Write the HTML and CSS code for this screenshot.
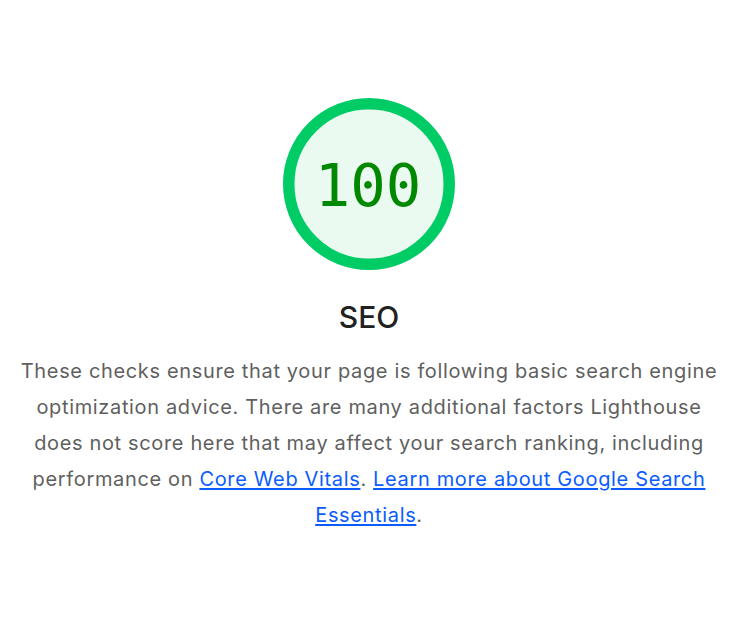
FILE: index.html
```html
<!DOCTYPE html>
<html lang="en">
<head>
<meta charset="utf-8">
<title>SEO</title>
<link rel="stylesheet" href="styles.css">
</head>
<body>
<main class="category">
  <div class="gauge">
    <svg class="gauge-svg" viewBox="0 0 172 172" width="172" height="172" aria-hidden="true">
      <circle cx="86" cy="86" r="80.25" fill="#ebfaf0" stroke="#00cc66" stroke-width="11.5"/>
    </svg>
    <span class="gauge-value">100</span>
  </div>
  <h2 class="title">SEO</h2>
  <p class="description">These checks ensure that your page is following basic search engine optimization advice. There are many additional factors Lighthouse does not score here that may affect your search ranking, including performance on <a href="#">Core Web Vitals</a>. <a href="#">Learn more about Google Search Essentials</a>.</p>
</main>
</body>
</html>
```
FILE: styles.css
```css
html, body {
  margin: 0;
  padding: 0;
  background: #ffffff;
}
body {
  width: 750px;
  height: 630px;
  font-family: "Inter", "Liberation Sans", sans-serif;
}
.category {
  width: 738px;
  display: flex;
  flex-direction: column;
  align-items: center;
  padding-top: 98px;
}
.gauge {
  position: relative;
  width: 172px;
  height: 172px;
  display: flex;
  align-items: center;
  justify-content: center;
}
.gauge-svg {
  position: absolute;
  inset: 0;
}
.gauge-value {
  position: relative;
  top: 1px;
  left: -1px;
  font-family: "DejaVu Sans Mono", monospace;
  font-size: 59px;
  color: #008800;
  line-height: 1;
}
.title {
  margin: 27px 0 0;
  font-size: 30px;
  font-weight: 500;
  color: #212121;
  line-height: 40px;
}
.description {
  margin: 16px 0 0;
  width: 708px;
  text-align: center;
  font-size: 20px;
  letter-spacing: 0.65px;
  line-height: 36px;
  color: #5f5f5f;
}
.description a {
  color: #0a5cff;
  text-decoration: underline;
  text-underline-offset: 2px;
}
```
